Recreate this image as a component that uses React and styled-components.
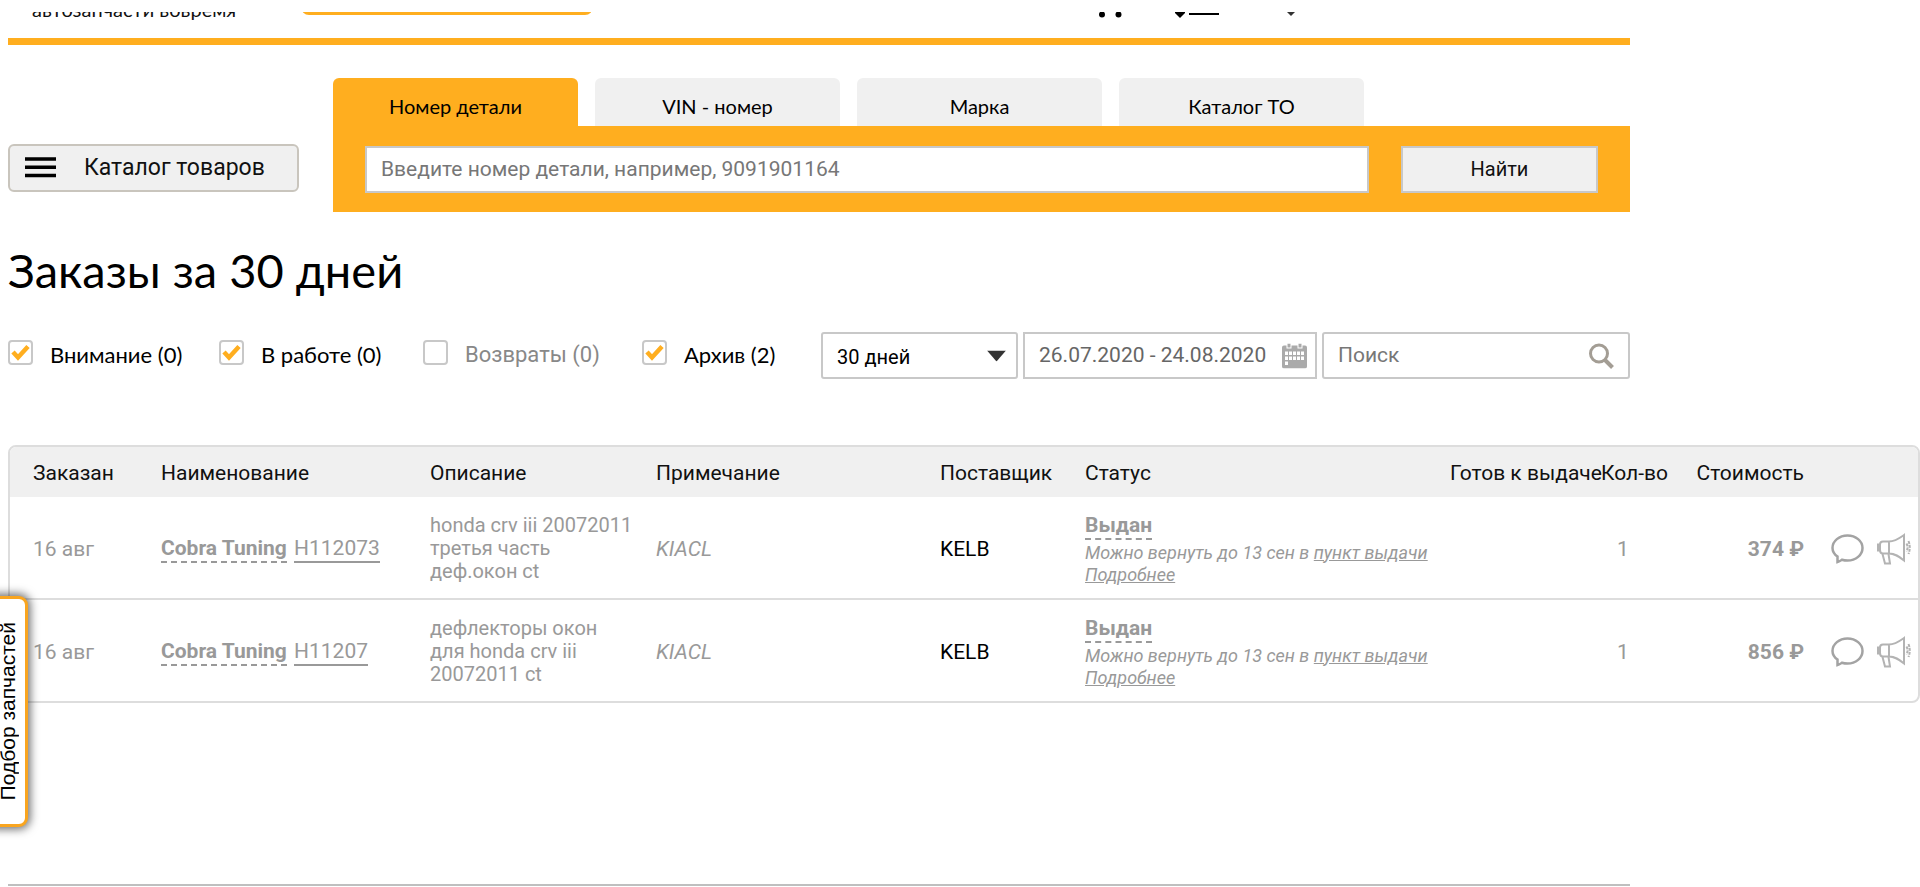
import React, { useState } from "react";
import styled, { createGlobalStyle } from "styled-components";

const accent = "#ffae1f";
const line = "#c8c8c8";
const muted = "#999";
const display = `"Gill Sans", Lato, "Open Sans", sans-serif`;
const body = `Roboto, "Liberation Sans", sans-serif`;

const GlobalStyle = createGlobalStyle`
  *, *::before, *::after { box-sizing: border-box; }
  body { margin: 0; background: #fff; color: #111; font: 20px/24px ${body}; overflow-x: hidden; }
  button, input, select { font: inherit; color: inherit; margin: 0; }
  a { color: inherit; }
`;

const Page = styled.div`
  position: relative;
  padding-left: 8px;
`;

const Content = styled.div`
  margin-right: 290px;
`;

const Header = styled.header`
  padding-top: 12px;
  border-bottom: 7px solid ${accent};
`;

const HeaderClip = styled.div`
  display: flex;
  align-items: flex-end;
  height: 26px;
  overflow: hidden;
`;

const Slogan = styled.span`
  width: 293px;
  padding: 0 0 17px 24px;
  font: 20px/24px ${display};
  white-space: nowrap;
`;

const CityButton = styled.button`
  width: 292px;
  height: 44px;
  margin-bottom: 23px;
  border: 0;
  border-radius: 8px;
  background: ${accent};
`;

const HeaderIcons = styled.div`
  display: flex;
  align-items: flex-end;
  gap: 53px;
  margin: 0 0 20px 505px;
`;

const SearchArea = styled.section`
  display: grid;
  grid-template-columns: 291px 1fr;
  column-gap: 34px;
  align-items: end;
  padding-top: 33px;
`;

const CatalogButton = styled.button`
  display: flex;
  align-items: center;
  gap: 28px;
  height: 48px;
  margin-bottom: 20px;
  padding: 0 15px;
  border: 2px solid #c9c5bd;
  border-radius: 6px;
  background: #f0f0f0;
  font-size: 23px;
`;

const Tabs = styled.div`
  display: flex;
  gap: 17px;
`;

const Tab = styled.button`
  width: 245px;
  height: 48px;
  padding: 8px 0 0;
  border: 0;
  border-radius: 6px 6px 0 0;
  background: ${(p) => (p.$active ? accent : "#f0f0f0")};
  color: #000;
  font-family: ${display};
  font-size: 20px;
`;

const SearchPanel = styled.form`
  display: grid;
  grid-template-columns: 1fr 197px;
  gap: 32px;
  padding: 20px 32px 19px;
  background: ${accent};
`;

const TextInput = styled.input`
  width: 100%;
  height: 47px;
  padding: 0 14px 2px;
  border: 2px solid ${line};
  border-radius: ${(p) => (p.$rounded ? "3px" : "0")};
  background: #fff;
  font-size: 21px;
  color: #666;
  &::placeholder { color: #777; opacity: 1; }
`;

const FindButton = styled.button`
  padding: 0 0 2px;
  border: 2px solid ${line};
  background: #f0f0f0;
  font-size: 20px;
`;

const Title = styled.h1`
  margin: 28px 0 32px;
  font: 400 47px/60px ${display};
  color: #000;
`;

const Filters = styled.div`
  display: grid;
  grid-template-columns: 211px 204px 219px 179px 202px 299px 1fr;
  align-items: center;
`;

const CheckLabel = styled.label`
  display: flex;
  align-items: center;
  gap: 17px;
  padding-bottom: 2px;
  font-family: ${(p) => (p.$off ? body : display)};
  font-size: 22px;
  color: ${(p) => (p.$off ? "#888" : "#000")};
  white-space: nowrap;
`;

const CheckBox = styled.span`
  display: grid;
  width: 25px;
  height: 25px;
  margin-bottom: 4px;
  & > * { grid-area: 1 / 1; }
  & > svg { place-self: center; pointer-events: none; }
`;

const CheckInput = styled.input`
  appearance: none;
  margin: 0;
  border: 2px solid ${line};
  border-radius: 4px;
  background: #fff;
`;

const Field = styled.div`
  position: relative;
  margin-right: ${(p) => p.$gap || 0}px;
  & > svg {
    position: absolute;
    right: ${(p) => p.$iconRight}px;
    top: 50%;
    transform: translateY(-50%);
    pointer-events: none;
  }
`;

const PeriodSelect = styled.select`
  appearance: none;
  width: 100%;
  height: 47px;
  padding: 3px 14px 0;
  border: 2px solid ${line};
  border-radius: 3px;
  background: #fff;
  font-size: 20px;
  color: #000;
`;

const TableFrame = styled.div`
  margin-top: 66px;
  border: 2px solid #ddd;
  border-radius: 8px;
  overflow: hidden;
`;

const OrdersTable = styled.table`
  width: 100%;
  table-layout: fixed;
  border-collapse: collapse;
`;

const HeadCell = styled.th`
  height: 50px;
  padding: 1px 0 0 ${(p) => p.$indent || 0}px;
  background: #f0f0f0;
  font-weight: 400;
  font-size: 21px;
  text-align: ${(p) => p.$align || "left"};
  white-space: nowrap;
`;

const Row = styled.tr`
  height: 102px;
  & + & { border-top: 2px solid #ddd; }
`;

const Cell = styled.td`
  padding: 2px 0 0 ${(p) => p.$indent || 0}px;
  color: ${(p) => (p.$dark ? "#000" : muted)};
  font-size: 21px;
  font-style: ${(p) => (p.$italic ? "italic" : "normal")};
  font-weight: ${(p) => (p.$bold ? 700 : 400)};
  text-align: ${(p) => p.$align || "left"};
`;

const Description = styled.div`
  font-size: 20px;
  line-height: 23px;
  white-space: pre-line;
`;

const DashedLink = styled.a`
  display: inline-block;
  border-bottom: 2px dashed ${muted};
  font-weight: 700;
  line-height: 26px;
  text-decoration: none;
`;

const PartLink = styled.a`
  display: inline-block;
  margin-left: 2px;
  border-bottom: 2px solid ${muted};
  line-height: 26px;
  text-decoration: none;
`;

const StatusNote = styled.div`
  margin-top: 2px;
  font-size: 18px;
  line-height: 22px;
  font-style: italic;
  white-space: nowrap;
`;

const Actions = styled.div`
  display: flex;
  align-items: center;
  gap: 13px;
`;

const IconButton = styled.button`
  display: flex;
  padding: 0;
  border: 0;
  background: none;
`;

const Footer = styled.footer`
  margin-top: 181px;
  border-top: 2px solid #bfbfbf;
`;

const SideTab = styled.button`
  position: absolute;
  left: -8px;
  top: 596px;
  display: flex;
  align-items: center;
  justify-content: center;
  width: 36px;
  height: 231px;
  padding: 0 4px 0 0;
  border: 3px solid #f9a51f;
  border-radius: 0 9px 9px 0;
  background: #fff;
  box-shadow: 0 0 10px 2px rgba(0, 0, 0, 0.6);
  color: #000;
  font: 21px/24px "Liberation Sans", sans-serif;
  & > span { writing-mode: vertical-rl; rotate: 180deg; white-space: nowrap; }
`;

const BurgerIcon = () => (
  <svg width="31" height="22" viewBox="0 0 31 22" aria-hidden="true">
    <path d="M0 2h31M0 10.2h31M0 18.500h31" stroke="#000" strokeWidth="3.5" />
  </svg>
);

const CartIcon = () => (
  <svg width="24" height="30" viewBox="0 0 24 30" aria-hidden="true">
    <circle cx="4" cy="26.5" r="3" />
    <circle cx="20.500" cy="26.5" r="3" />
    <path d="M0 2h5l3 14h14" fill="none" stroke="#000" strokeWidth="2" />
  </svg>
);

const RouteIcon = () => (
  <svg width="44" height="30" viewBox="0 0 44 30" aria-hidden="true">
    <path d="M0 18h10v7l-5 5l-5-5z" />
    <path d="M14 26h30" stroke="#000" strokeWidth="2" />
  </svg>
);

const PinIcon = () => (
  <svg width="23" height="29" viewBox="0 0 23 29" aria-hidden="true">
    <path d="M15 12h8v11l-4 4l-4-4z" fill="#333" />
  </svg>
);

const TickIcon = () => (
  <svg width="19" height="17" viewBox="0 0 19 17" aria-hidden="true">
    <path d="M2 8l5 5.500L17 2.500" fill="none" stroke={accent} strokeWidth="4.500" />
  </svg>
);

const ArrowIcon = () => (
  <svg width="19" height="11" viewBox="0 0 19 11" aria-hidden="true">
    <path d="M0 0h19l-9.500 11z" fill="#333" />
  </svg>
);

const CalendarIcon = () => (
  <svg width="25" height="25" viewBox="0 0 25 25" aria-hidden="true">
    <path
      fill="#aaa"
      d="M2 2h2.500v3h5V2h6v3h5V2H23a2 2 0 0 1 2 2v19a2 2 0 0 1-2 2H2a2 2 0 0 1-2-2V4a2 2 0 0 1 2-2z"
    />
    <path fill="#aaa" d="M5.500 0h3v4h-3zM16.500 0h3v4h-3z" />
    <g fill="#fff">
      {[8, 13].map((y) =>
        [3, 7, 11, 15, 19].map((x) => <rect key={`${x}-${y}`} x={x} y={y} width="3" height="3.500" />)
      )}
      <rect x="3" y="18" width="3" height="3.500" />
    </g>
  </svg>
);

const SearchIcon = () => (
  <svg width="25" height="26" viewBox="0 0 25 26" aria-hidden="true" fill="none" stroke="#a39d94">
    <circle cx="10" cy="10.500" r="8.500" strokeWidth="3" />
    <path d="M16 17l7.500 7.500" strokeWidth="4" />
  </svg>
);

const BubbleIcon = () => (
  <svg width="33" height="30" viewBox="0 0 33 30" fill="none" stroke="#a3a3a3" strokeWidth="2.500">
    <path d="M6.500 28V22.500C3.500 20.500 1.500 17.500 1.500 14C1.500 7 8.200 1.500 16.500 1.500S31.500 7 31.500 14S24.800 26.500 16.500 26.500C14.500 26.500 12.600 26.200 11 25.700C9.500 26.700 8 27.600 6.500 28z" />
  </svg>
);

const MegaphoneIcon = () => (
  <svg width="34" height="32" viewBox="0 0 34 32" fill="none" stroke="#b3b3b3" strokeWidth="2">
    <path d="M12 8.500H6C3.500 8.500 3 10 3 11.500V17C3 19 4 20.500 6 20.500H12zM12 8.500C18 8.500 22 5.500 27 2V27.500C22 23.500 18 20.500 12 20.500" />
    <path d="M3 11.500H1V17.500H3M5.500 21L8 30.500H13L11.500 21" />
    <path d="M29.500 10.500Q31.500 14.500 29.500 18.500M31.500 8Q34 14.500 31.500 21" strokeDasharray="3 1" />
  </svg>
);

const tabs = ["Номер детали", "VIN - номер", "Марка", "Каталог ТО"];

const initialFilters = [
  { label: "Внимание (0)", on: true },
  { label: "В работе (0)", on: true },
  { label: "Возвраты (0)", on: false },
  { label: "Архив (2)", on: true },
];

const orders = [
  { part: "H112073", text: "honda crv iii 20072011\nтретья часть\nдеф.окон ct", price: "374 ₽" },
  { part: "H11207", text: "дефлекторы окон\nдля honda crv iii\n20072011 ct", price: "856 ₽" },
];

const columns = [151, 269, 226, undefined, 145, 365, 151, 95, 108, 114];

export default function App() {
  const [tab, setTab] = useState(0);
  const [filters, setFilters] = useState(initialFilters);
  const toggle = (i) => setFilters(filters.map((f, n) => (n === i ? { ...f, on: !f.on } : f)));

  return (
    <Page>
      <GlobalStyle />
      <Content>
        <Header>
          <HeaderClip>
            <Slogan>автозапчасти вовремя</Slogan>
            <CityButton type="button" aria-label="Город" />
            <HeaderIcons>
              <CartIcon />
              <RouteIcon />
              <PinIcon />
            </HeaderIcons>
          </HeaderClip>
        </Header>

        <SearchArea>
          <CatalogButton type="button">
            <BurgerIcon />
            Каталог товаров
          </CatalogButton>
          <div>
            <Tabs>
              {tabs.map((name, i) => (
                <Tab key={name} type="button" $active={i === tab} onClick={() => setTab(i)}>
                  {name}
                </Tab>
              ))}
            </Tabs>
            <SearchPanel onSubmit={(e) => e.preventDefault()}>
              <TextInput
                aria-label="Номер детали"
                placeholder="Введите номер детали, например, 9091901164"
              />
              <FindButton type="submit">Найти</FindButton>
            </SearchPanel>
          </div>
        </SearchArea>

        <Title>Заказы за 30 дней</Title>

        <Filters>
          {filters.map((f, i) => (
            <CheckLabel key={f.label} $off={!f.on}>
              <CheckBox>
                <CheckInput type="checkbox" checked={f.on} onChange={() => toggle(i)} />
                {f.on && <TickIcon />}
              </CheckBox>
              {f.label}
            </CheckLabel>
          ))}
          <Field $iconRight={12} $gap={5}>
            <PeriodSelect aria-label="Период">
              <option>30 дней</option>
            </PeriodSelect>
            <ArrowIcon />
          </Field>
          <Field $iconRight={10} $gap={5}>
            <TextInput aria-label="Даты" defaultValue="26.07.2020 - 24.08.2020" />
            <CalendarIcon />
          </Field>
          <Field $iconRight={16}>
            <TextInput $rounded aria-label="Поиск" placeholder="Поиск" />
            <SearchIcon />
          </Field>
        </Filters>
      </Content>

      <TableFrame>
        <OrdersTable>
          <colgroup>
            {columns.map((w, i) => (
              <col key={i} width={w} />
            ))}
          </colgroup>
          <thead>
            <tr>
              <HeadCell $indent={23}>Заказан</HeadCell>
              <HeadCell>Наименование</HeadCell>
              <HeadCell>Описание</HeadCell>
              <HeadCell>Примечание</HeadCell>
              <HeadCell>Поставщик</HeadCell>
              <HeadCell>Статус</HeadCell>
              <HeadCell>Готов к выдаче</HeadCell>
              <HeadCell>Кол-во</HeadCell>
              <HeadCell $align="right">Стоимость</HeadCell>
              <HeadCell />
            </tr>
          </thead>
          <tbody>
            {orders.map((o) => (
              <Row key={o.part}>
                <Cell $indent={23}>16 авг</Cell>
                <Cell>
                  <DashedLink href="#brand">Cobra Tuning</DashedLink>{" "}
                  <PartLink href="#part">{o.part}</PartLink>
                </Cell>
                <Cell>
                  <Description>{o.text}</Description>
                </Cell>
                <Cell $italic>KIACL</Cell>
                <Cell $dark>KELB</Cell>
                <Cell>
                  <DashedLink href="#status">Выдан</DashedLink>
                  <StatusNote>
                    Можно вернуть до 13 сен в <a href="#point">пункт выдачи</a>
                    <br />
                    <a href="#more">Подробнее</a>
                  </StatusNote>
                </Cell>
                <Cell />
                <Cell $indent={16}>1</Cell>
                <Cell $bold $align="right">{o.price}</Cell>
                <Cell $indent={27}>
                  <Actions>
                    <IconButton type="button" aria-label="Сообщение"><BubbleIcon /></IconButton>
                    <IconButton type="button" aria-label="Претензия"><MegaphoneIcon /></IconButton>
                  </Actions>
                </Cell>
              </Row>
            ))}
          </tbody>
        </OrdersTable>
      </TableFrame>

      <Content>
        <Footer />
      </Content>

      <SideTab type="button"><span>Подбор запчастей</span></SideTab>
    </Page>
  );
}
